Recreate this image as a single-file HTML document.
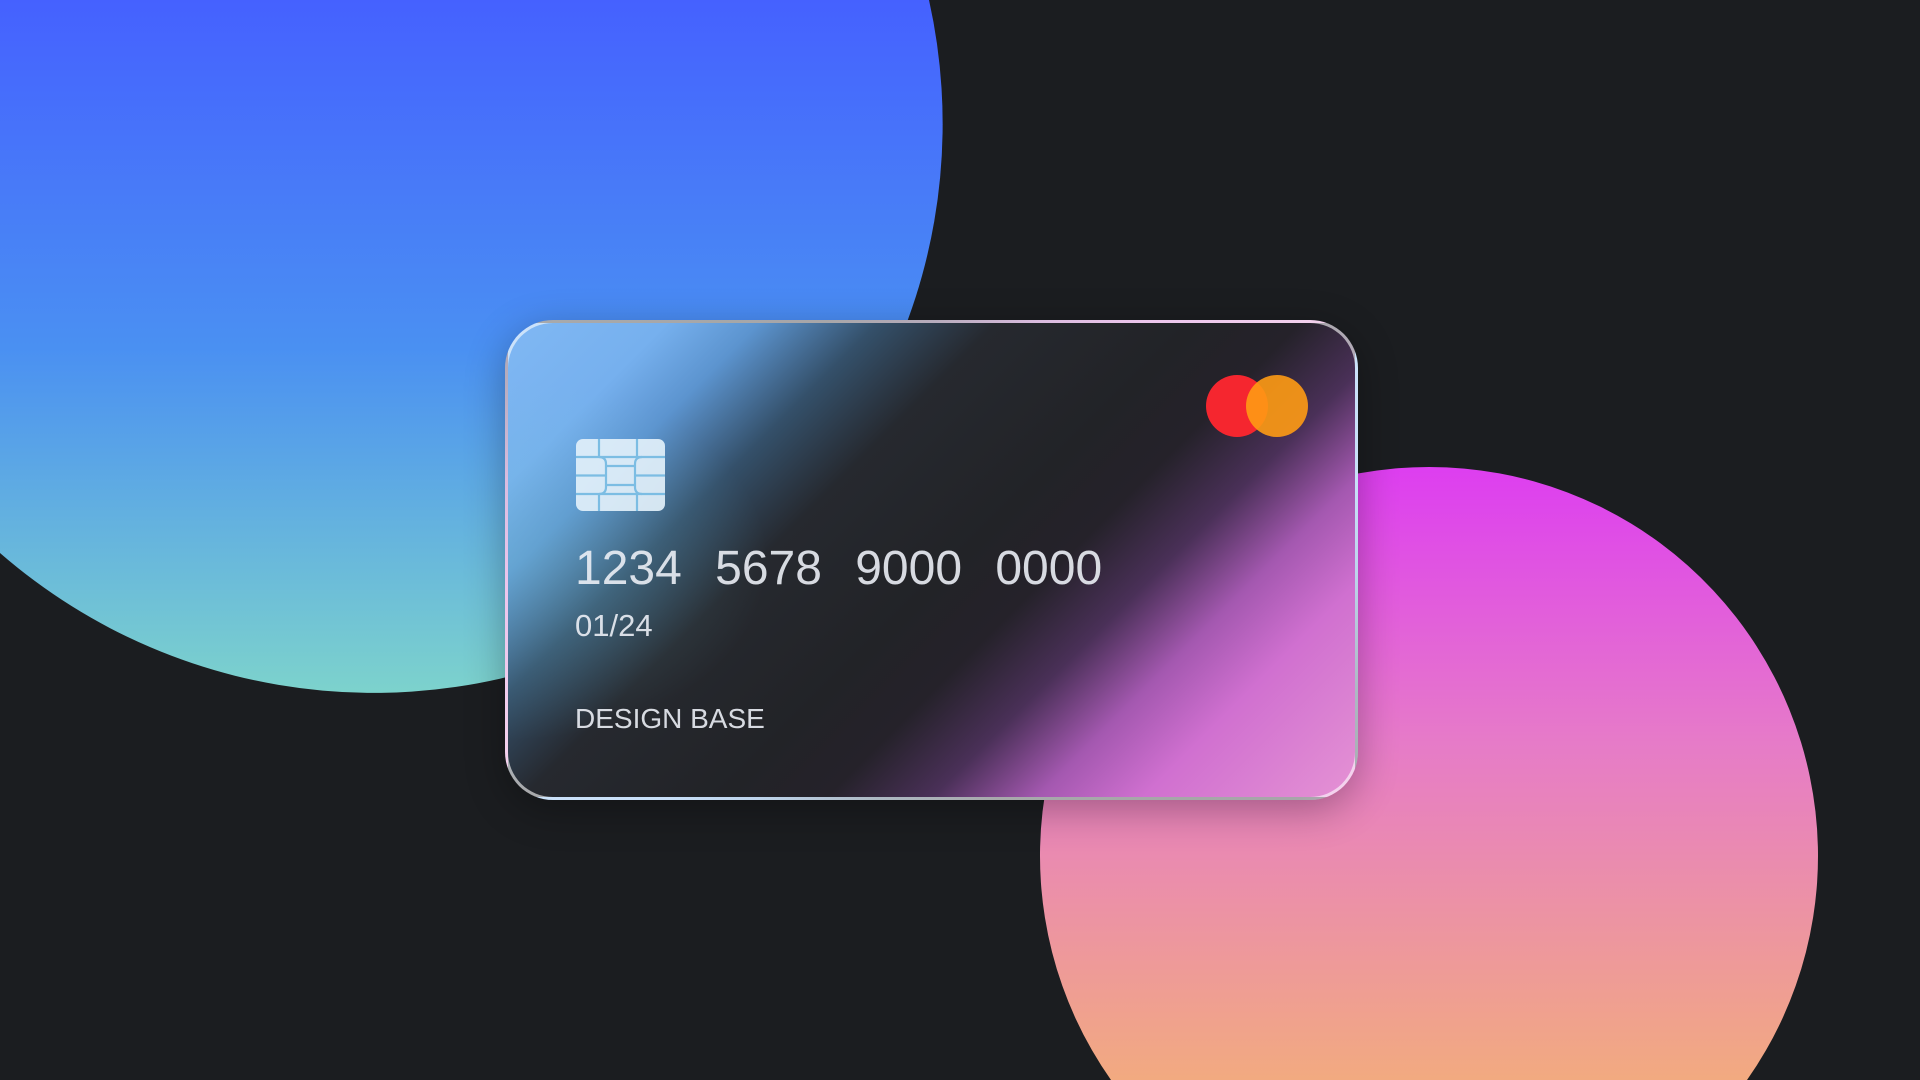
<!DOCTYPE html>
<html><head><style>
html,body{margin:0;padding:0;width:1920px;height:1080px;overflow:hidden;background:#1b1d20;font-family:"Liberation Sans",sans-serif}
#wrap{position:relative;width:1920px;height:1080px;overflow:hidden;background:#1b1d20}
#card{position:absolute;left:505px;top:320px;width:853px;height:480px;border-radius:48px;border:3px solid rgba(255,255,255,.6);box-sizing:border-box;background:linear-gradient(135deg,#80b8f4 0%,#76b0ee 12%,#5c94cf 19%,#34506a 28%,#26292f 37%,#222327 52%,#25222a 60%,#4a3058 68%,#a458b0 76%,#d070d0 84%,#e592d4 100%);box-shadow:0 10px 40px rgba(0,0,0,.3);overflow:hidden}
#card:before{content:"";position:absolute;left:0;top:0;right:0;bottom:0;background:radial-gradient(ellipse 260px 180px at 0% 50%,rgba(120,200,215,.3),transparent)}
.t{position:absolute;color:rgba(235,238,245,.9);font-family:"Liberation Sans",sans-serif}
</style></head><body><div id="wrap">
<svg style="position:absolute;left:0;top:0" width="1920" height="1080" viewBox="0 0 1920 1080">
<defs>
<linearGradient id="bg" x1="0" y1="0" x2="0" y2="696" gradientUnits="userSpaceOnUse">
<stop offset="0" stop-color="#4561ff"/><stop offset=".5" stop-color="#4a90f2"/><stop offset="1" stop-color="#7dd3cc"/></linearGradient>
<linearGradient id="pg" x1="0" y1="467" x2="0" y2="1080" gradientUnits="userSpaceOnUse">
<stop offset="0" stop-color="#dd3ef0"/><stop offset=".45" stop-color="#e67bc8"/><stop offset="1" stop-color="#f2aa80"/></linearGradient></defs>
<path d="M0 553 A569 569 0 0 0 929 0 L0 0 Z" fill="url(#bg)"/>
<path d="M1111 1080 A389 389 0 1 1 1747 1080 Z" fill="url(#pg)"/>
</svg>
<div id="card">
<svg style="position:absolute;left:67px;top:115px" width="92" height="75" viewBox="0 0 92 75">
<rect x="1" y="1" width="89" height="72" rx="7" fill="#e2f0fa" opacity=".92"/>
<g stroke="#7cbde3" stroke-width="2.2" fill="none">
<path d="M24 1V19M62 1V19M24 56V73M62 56V73"/>
<path d="M1 19H24Q31 19 31 26V49Q31 56 24 56H1M1 37.5H31"/>
<path d="M90 19H67Q60 19 60 26V49Q60 56 67 56H90M90 37.5H60"/>
<path d="M24 19H67M24 56H67M31 28H60M31 47H60"/>
</g></svg>
<div class="t" style="left:67px;top:218px;font-size:48px;word-spacing:20px">1234 5678 9000 0000</div>
<div class="t" style="left:67px;top:285px;font-size:31px">01/24</div>
<div class="t" style="left:67px;top:380px;font-size:28px">DESIGN BASE</div>
<div style="position:absolute;left:698px;top:52px;width:62px;height:62px;border-radius:50%;background:#f5262f"></div>
<div style="position:absolute;left:738px;top:52px;width:62px;height:62px;border-radius:50%;background:rgba(255,155,20,.9)"></div>
</div>
</div></body></html>
